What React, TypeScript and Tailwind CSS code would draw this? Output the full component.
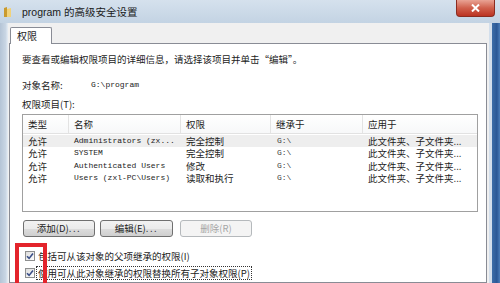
import React from "react";

const cols = ["w-[46px]", "w-[112px]", "w-[90px]", "w-[92px]", "flex-1"];

type Row = { type: string; name: string; perm: string; inh: string; apply: string };
const rows: Row[] = [
  { type: "允许", name: "Administrators (zx...", perm: "完全控制", inh: "G:\\", apply: "此文件夹、子文件夹..." },
  { type: "允许", name: "SYSTEM", perm: "完全控制", inh: "G:\\", apply: "此文件夹、子文件夹..." },
  { type: "允许", name: "Authenticated Users", perm: "修改", inh: "G:\\", apply: "此文件夹、子文件夹..." },
  { type: "允许", name: "Users (zxl-PC\\Users)", perm: "读取和执行", inh: "G:\\", apply: "此文件夹、子文件夹..." },
];

function Check() {
  return (
    <div className="w-[10px] h-[10px] border border-[#8e8f8f] bg-[linear-gradient(135deg,#dcdcdc,#ffffff)] flex items-center justify-center shrink-0">
      <svg width="8" height="8" viewBox="0 0 8 8">
        <path d="M1 4.2 L3.1 6.4 L7 1.4" stroke="#3a4f88" strokeWidth="1.6" fill="none" />
      </svg>
    </div>
  );
}

export default function App() {
  return (
    <div className="relative w-[500px] h-[283px] overflow-hidden flex flex-col bg-[#c7d6e6] text-[#1c1c1c] [font-family:'Noto_Sans_CJK_SC',sans-serif]">
      {/* title bar */}
      <div className="relative h-[23px] shrink-0 flex items-center bg-[linear-gradient(180deg,#d5e1ed,#c3d3e3)]">
        <svg width="9" height="12" viewBox="0 0 9 12" className="ml-[3px]">
          <path d="M1 2 L4 1 L4 11 L1 11 Z" fill="#c99a2e" />
          <path d="M4 3 L8 2 L8 11 L4 11 Z" fill="#f1d27a" />
        </svg>
        <span className="ml-[10px] text-[10.5px] leading-[12px] text-[#1a1a1a] [font-family:'Liberation_Sans','Noto_Sans_CJK_SC',sans-serif]">
          program 的高级安全设置
        </span>
        <div className="absolute top-0 right-[5px] w-[39px] h-[17px] rounded-b-[4px] border border-t-0 border-[#8b2c20] bg-[linear-gradient(180deg,#e9a394_0%,#d0604c_50%,#bb3322_100%)] flex items-center justify-center">
          <svg width="9" height="8" viewBox="0 0 9 8">
            <path d="M1 0.5 L8 7.5 M8 0.5 L1 7.5" stroke="#ffffff" strokeWidth="2" />
          </svg>
        </div>
      </div>

      {/* body */}
      <div className="flex flex-1 min-h-0">
        <div className="w-[8px] bg-[linear-gradient(90deg,#b4c4d6,#c9d6e4_70%,#e6edf4)]" />
        <div className="flex-1 bg-[#f0f0f0] pt-[4px] pl-[1px] pr-[2px] flex flex-col">
          <div className="relative z-10 ml-[1px] -mb-[1px] w-[42px] h-[17px] border border-b-0 border-[#898c95] bg-white rounded-t-[2px] text-[10px] leading-[16px] pl-[6px]">
            权限
          </div>
          <div className="flex-1 border border-[#898c95] bg-white pl-[12px] pt-[9px] text-[9.5px]">
            <div className="h-[12px] leading-[12px] whitespace-nowrap">
              要查看或编辑权限项目的详细信息，请选择该项目并单击“编辑”。
            </div>
            <div className="mt-[14px] h-[12px] leading-[12px] flex items-center">
              <span className="w-[69px]">对象名称:</span>
              <span className="text-[8px] [font-family:'Liberation_Mono',monospace]">G:\program</span>
            </div>
            <div className="mt-[6.5px] h-[12px] leading-[12px]">权限项目(T):</div>

            {/* list */}
            <div className="mt-[4.5px] w-[456px] h-[98px] border border-[#a0a0a0] flex flex-col">
              <div className="h-[19px] flex border-b border-[#e2e2e2] bg-[linear-gradient(180deg,#ffffff,#f7f8f9)]">
                {["类型", "名称", "权限", "继承于", "应用于"].map((h, i) => (
                  <div key={h} className={`${cols[i]} pl-[5px] flex items-center ${i < 4 ? "border-r border-[#e3e3e3]" : ""}`}>
                    {h}
                  </div>
                ))}
              </div>
              <div className="mt-[1px]">
                {rows.map((r, idx) => (
                  <div key={idx} className={`h-[12.3px] leading-[12px] flex items-center overflow-hidden ${idx === 0 ? "bg-[#eeeeee]" : ""}`}>
                    <div className="w-[46px] pl-[5px] leading-[12px]">{r.type}</div>
                    <div className="w-[112px] pl-[5px] leading-[12px] text-[8px] [font-family:'Liberation_Mono',monospace] whitespace-nowrap">{r.name}</div>
                    <div className="w-[90px] pl-[5px] leading-[12px]">{r.perm}</div>
                    <div className="w-[92px] pl-[6px] leading-[12px] text-[8px] [font-family:'Liberation_Mono',monospace] text-[#444]">{r.inh}</div>
                    <div className="flex-1 pl-[5px] leading-[12px] whitespace-nowrap">{r.apply}</div>
                  </div>
                ))}
              </div>
            </div>

            {/* buttons */}
            <div className="mt-[8px] flex">
              <div className="ml-[1px] w-[72px] h-[17px] rounded-[3px] border border-[#707070] bg-[linear-gradient(180deg,#f2f2f2_0%,#ebebeb_50%,#dddddd_50%,#cfcfcf_100%)] flex items-center justify-center">
                添加(D)<span className="tracking-[1.5px]">...</span>
              </div>
              <div className="ml-[5px] w-[73px] h-[17px] rounded-[3px] border border-[#707070] bg-[linear-gradient(180deg,#f2f2f2_0%,#ebebeb_50%,#dddddd_50%,#cfcfcf_100%)] flex items-center justify-center">
                编辑(E)<span className="tracking-[1.5px]">...</span>
              </div>
              <div className="ml-[7px] w-[72px] h-[17px] rounded-[3px] border border-[#b5b9bc] bg-[#f4f4f4] text-[#a6a6a6] flex items-center justify-center">
                删除(R)
              </div>
            </div>

            {/* checkboxes */}
            <div className="mt-[12px] h-[14px] flex items-center">
              <div className="ml-[3px]"><Check /></div>
              <span className="ml-[2px] px-[1px] leading-[12px] whitespace-nowrap">包括可从该对象的父项继承的权限(I)</span>
            </div>
            <div className="mt-[3px] h-[14px] flex items-center">
              <div className="ml-[3px]"><Check /></div>
              <span className="ml-[1px] px-[1px] leading-[12px] border border-dotted border-[#333] whitespace-nowrap">使用可从此对象继承的权限替换所有子对象权限(P)</span>
            </div>
          </div>
        </div>
        <div className="w-[3px] bg-[#d3dfec]" />
        <div className="w-[8px] bg-[linear-gradient(90deg,#3d6ea8,#2a5896_60%,#4b7db8)]" />
      </div>

      {/* red annotation */}
      <div className="absolute left-[15px] top-[243px] w-[32px] h-[50px] border-[4px] border-[#e3242b]" />
    </div>
  );
}
